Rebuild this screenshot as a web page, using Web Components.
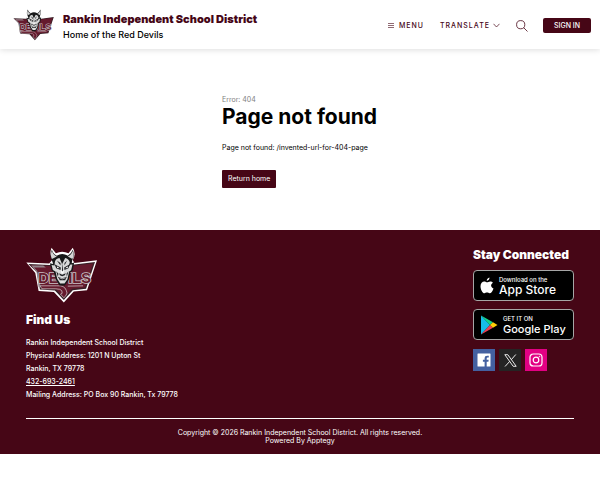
<!DOCTYPE html>
<html lang="en">
<head>
<meta charset="utf-8">
<meta name="viewport" content="width=device-width, initial-scale=1">
<title>Page not found</title>
<style>
body { margin: 0; background: #fff; color: #000; font-family: Inter, "Liberation Sans", sans-serif; --brand: #460616; --rule: #fff; }
</style>
</head>
<body>
<district-page></district-page>
<script>
const define = (name, html) => {
  const template = document.createElement('template');
  template.innerHTML = html;
  customElements.define(name, class extends HTMLElement {
    constructor() {
      super();
      this.attachShadow({ mode: 'open' }).append(template.content.cloneNode(true));
    }
  });
};

define('devils-logo', `
<style>
:host { display: block; }
svg { display: block; width: 100%; }
text { font: 700 44px "Liberation Sans", sans-serif; fill: #651a2d; stroke: #c9c2c5; stroke-width: 5; paint-order: stroke; }
</style>
<svg viewBox="46 34 214 168" role="img" aria-label="Rankin Red Devils">
  <path d="M47 81L116 84L126 72Q115 57 123 36L136 53Q155 43 174 53L187 36Q198 56 187 73L192 82L260 74L230 164L190 168L160 201L130 170L84 167L74 112Z" fill="#fff"/>
  <path d="M53 85L116 88L192 87L254 79L227 160L187 164L160 194L133 165L88 162L79 110Z" fill="#382027"/>
  <path d="M59 89L118 91L193 90L248 84L224 156L185 160L160 187L137 161L92 158L82 108Z" fill="#651a2d"/>
  <path d="M62 90H98L106 96H70L80 106L90 152L84 156L78 110Z" fill="#938289"/>
  <text x="83" y="143">DEVILS</text>
  <path d="M88 151H139Q162 149 167 164Q173 173 166 181L160 187L150 176Q158 176 154 166Q151 160 136 160H94Z" fill="#651a2d" stroke="#ddd" stroke-width="2"/>
  <path d="M172 152L218 151" stroke="#ddd" stroke-width="2"/>
  <path d="M124 74Q116 58 124 42Q128 55 139 60Q155 50 172 60Q183 54 187 42Q194 59 185 75L184 83L191 81L187 105L180 110L175 133L163 150H147L136 132L130 110L123 104L118 83L128 85Z" fill="#171819"/>
  <path d="M124 70Q118 57 124 46Q129 59 139 63ZM186 70Q192 57 187 46Q182 59 172 63Z" fill="#d5d6d6"/>
  <path d="M133 79Q135 69 147 67L155 85L164 67Q175 69 178 80L174 94L180 87L186 87L182 104L176 108L171 131L162 144H149L140 130L135 108L127 103L123 88L132 90Z" fill="#d9dada"/>
  <path d="M132 86L151 96L150 103L137 98ZM178 86L161 96L162 103L174 98ZM154 80L158 103L155 111ZM146 113L155 118L166 113L163 119L155 122L148 119ZM142 124L155 128L169 124L164 134H148ZM139 75L150 82L150 90ZM170 75L162 82V90ZM137 107L144 115L142 124ZM174 107L168 115L169 124Z" fill="#202124"/>
  <path d="M139 92L148 98L140 97ZM172 92L164 98L172 97ZM151 104L155 108L161 104L158 114H153Z" fill="#fff"/>
  <path d="M147 127L155 130L165 127M151 139H160" fill="none" stroke="#eee" stroke-width="2"/>
</svg>`);

define('site-header', `
<style>
:host { display: flex; align-items: center; height: 49px; padding: 0 9px 0 12px; box-shadow: 0 1px 6px #0002; color: var(--brand); }
devils-logo { width: 43px; margin-right: 8px; }
.name { flex: 1; padding-top: 4px; font-size: 11px; line-height: 15px; white-space: nowrap; }
.name strong { display: block; font-weight: 900; }
.name span { display: block; color: #000; font-size: 9px; font-weight: 500; }
nav { display: flex; align-items: center; padding-top: 2px; }
button { font: 500 7px/15px Inter, sans-serif; letter-spacing: 1px; color: inherit; border: 0; background: none; padding: 0; display: flex; align-items: center; }
svg { fill: none; stroke: currentColor; display: block; }
.menu { gap: 5px; margin-right: 16px; }
.translate { gap: 3px; margin-right: 16px; }
.search { margin-right: 15px; }
.sign { background: var(--brand); color: #fff; border-radius: 2px; padding: 0 11px; letter-spacing: 0; }
</style>
<devils-logo></devils-logo>
<div class="name"><strong>Rankin Independent School District</strong><span>Home of the Red Devils</span></div>
<nav>
  <button class="menu"><svg width="6" height="5" viewBox="0 0 6 5" shape-rendering="crispEdges"><path d="M0 .5H6M0 2.500H6M0 4.500H6" stroke-opacity=".6"/></svg>MENU</button>
  <button class="translate">TRANSLATE<svg width="7" height="5" viewBox="0 0 7 5"><path d="M.5 .8L3.500 4L6.500 .8" stroke-width=".7"/></svg></button>
  <button class="search" aria-label="Search"><svg width="12" height="12" viewBox="0 0 12 12"><circle cx="4.700" cy="4.700" r="4.100" stroke-width=".8"/><path d="M7.700 7.700L11.500 11.500" stroke-width=".8"/></svg></button>
  <button class="sign">SIGN IN</button>
</nav>`);

define('error-message', `
<style>
:host { display: block; width: 26%; min-width: 156px; margin: 0 auto; padding: 46px 0 42px; font-size: 7px; line-height: 10px; }
small { display: block; font-size: 7px; color: #808080; }
h1 { margin: 0; font-size: 21px; line-height: 24px; font-weight: 700; white-space: nowrap; }
p { margin: 14px 0 17px; }
a { display: inline-block; background: var(--brand); color: #fff; text-decoration: none; padding: 4px 6px; border-radius: 1px; }
</style>
<small>Error: 404</small>
<h1>Page not found</h1>
<p>Page not found: /invented-url-for-404-page</p>
<a href="#">Return home</a>`);

define('store-badge', `
<style>
:host { display: block; }
a { box-sizing: border-box; display: flex; align-items: center; gap: 5px; height: 31px; padding: 0 6px; border: 1px solid #a6a6a6; border-radius: 4px; background: #000; color: #fff; text-decoration: none; white-space: nowrap; }
</style>
<a href="#"><slot name="icon"></slot><slot></slot></a>`);

define('social-link', `
<style>
:host { display: block; }
a { display: flex; align-items: center; justify-content: center; width: 22px; height: 22px; color: #fff; }
</style>
<a href="#"><slot></slot></a>`);

define('site-footer', `
<style>
:host { display: block; background: var(--brand); color: #fff; padding: 17px 26px 9px; }
.columns { display: flex; justify-content: space-between; padding-bottom: 17px; border-bottom: 1px solid var(--rule); }
devils-logo { width: 71px; }
h2 { font-size: 12px; line-height: 15px; font-weight: 900; margin: 0; }
.find h2 { margin: 9px 0; }
address { font-style: normal; font-size: 7px; line-height: 13px; font-weight: 500; }
address a { color: inherit; }
.connect { width: 101px; }
.connect h2 { white-space: nowrap; margin-bottom: 8px; }
store-badge { margin-bottom: 8px; }
store-badge svg { display: block; flex: none; }
.label { font-size: 12px; line-height: 12px; font-weight: 500; }
.label small { display: block; font-size: 6px; line-height: 8px; }
.google { font-size: 11px; }
.social { display: flex; gap: 4px; padding-top: 1px; }
.social svg { display: block; }
.fb { background: #4460a0; } .x { background: #242424; } .ig { background: #e20083; }
.legal { margin: 10px 0 0; text-align: center; font-size: 7px; line-height: 8px; }
</style>
<div class="columns">
  <section class="find">
    <devils-logo></devils-logo>
    <h2>Find Us</h2>
    <address>Rankin Independent School District<br>Physical Address: 1201 N Upton St<br>Rankin, TX 79778<br><a href="tel:4326932461">432-693-2461</a><br>Mailing Address: PO Box 90 Rankin, Tx 79778</address>
  </section>
  <section class="connect">
    <h2>Stay Connected</h2>
    <store-badge><svg slot="icon" width="14" height="17" viewBox="0 0 14 17"><path d="M9.500 .5C9.600 2.300 8.300 3.700 6.700 3.800C6.600 2.200 8 .8 9.500 .5ZM12.900 5.700C10.200 7.300 10.700 10.300 13.500 11.500C12.500 14.300 11.100 16.400 9.600 16.300C8.600 16.200 8.300 15.600 7 15.600S5.300 16.300 4.500 16.300C2.600 16.300 .5 12.400 .5 9.200C.5 6.200 2.300 4.500 4.300 4.500C5.500 4.500 6.400 5.300 7.200 5.300C7.900 5.300 9.100 4.300 10.500 4.500C11.600 4.600 12.400 5 12.900 5.700Z" fill="#fff"/></svg><span class="label"><small>Download on the</small>App Store</span></store-badge>
    <store-badge><svg slot="icon" width="18" height="20" viewBox="0 0 18 20"><path d="M1 .5V19.500L10 10Z" fill="#17bde8"/><path d="M1 .5L13 7.200L10 10Z" fill="#13d28a"/><path d="M1 19.500L13 12.800L10 10Z" fill="#ee4054"/><path d="M13 7.200L17.500 10L13 12.800L10 10Z" fill="#ffce08"/></svg><span class="label google"><small>GET IT ON</small>Google Play</span></store-badge>
    <div class="social">
      <social-link class="fb"><svg width="14" height="14" viewBox="0 0 14 14" role="img" aria-label="Facebook"><path d="M1 .5H13Q13.500 .5 13.500 1V13Q13.500 13.500 13 13.500H9.700V8.700H11.400L11.700 6.700H9.700V5.400Q9.700 4.500 10.700 4.500H11.800V2.700H10.100Q7.600 2.700 7.600 5.100V6.700H5.900V8.700H7.600V13.500H1Q.5 13.500 .5 13V1Q.5 .5 1 .5Z" fill="#fff"/></svg></social-link>
      <social-link class="x"><svg width="13" height="13" viewBox="0 0 13 13" role="img" aria-label="X"><path d="M.8 .7H3.800L12.200 12.300H9.200ZM11.800 .5L7.300 5.700M5.700 7.400L1 12.500" fill="none" stroke="#fff" stroke-width=".9"/></svg></social-link>
      <social-link class="ig"><svg width="14" height="14" viewBox="0 0 14 14" fill="none" stroke="#fff" stroke-width="1.200" role="img" aria-label="Instagram"><rect x="1" y="1" width="12" height="12" rx="3.300"/><circle cx="7" cy="7" r="2.800"/><circle cx="10.500" cy="3.500" r=".4" fill="#fff" stroke-width=".6"/></svg></social-link>
    </div>
  </section>
</div>
<p class="legal">Copyright © 2026 Rankin Independent School District. All rights reserved.<br>Powered By Apptegy</p>`);

define('district-page', `
<style>:host { display: block; }</style>
<site-header></site-header>
<main><error-message></error-message></main>
<site-footer></site-footer>`);
</script>
</body>
</html>
